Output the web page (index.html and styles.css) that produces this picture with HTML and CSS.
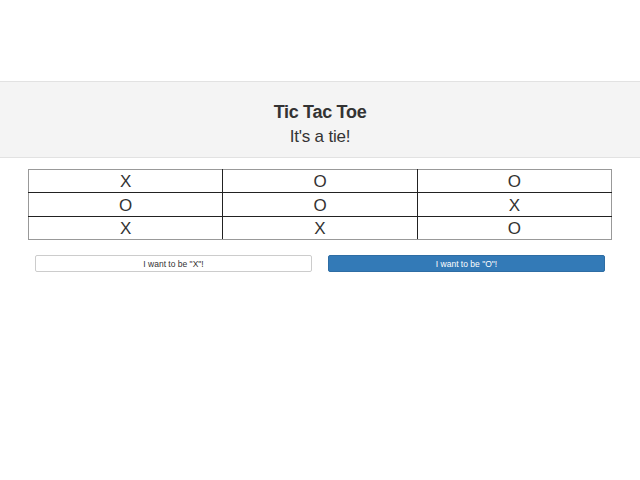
FILE: index.html
```html
<!DOCTYPE html>
<html>
<head>
<meta charset="utf-8">
<link rel="stylesheet" href="styles.css">
</head>
<body>
<div class="page">
  <header class="jumbo">
    <h1 class="title">Tic Tac Toe</h1>
    <p class="status">It's a tie!</p>
  </header>
  <div class="wrap">
    <table class="board">
      <tr><td>X</td><td>O</td><td>O</td></tr>
      <tr><td>O</td><td>O</td><td>X</td></tr>
      <tr><td>X</td><td>X</td><td>O</td></tr>
    </table>
    <div class="choices">
      <button class="btn btn-default">I want to be "X"!</button>
      <button class="btn btn-primary">I want to be "O"!</button>
    </div>
  </div>
</div>
</body>
</html>
```
FILE: styles.css
```css
html, body {
  margin: 0;
  padding: 0;
  background: #fff;
  font-family: "Liberation Sans", Arial, sans-serif;
  color: #333;
}
.page {
  padding-top: 81px;
}
.jumbo {
  background: #f4f4f4;
  border-top: 1px solid #e2e2e2;
  border-bottom: 1px solid #e2e2e2;
  height: 75px;
  display: flex;
  flex-direction: column;
  align-items: center;
}
.title {
  margin: 19px 0 0;
  font-size: 18px;
  line-height: 22px;
  font-weight: bold;
  letter-spacing: -0.3px;
  color: #333;
}
.status {
  margin: 4px 0 0;
  font-size: 17px;
  line-height: 20px;
  letter-spacing: -0.2px;
}
.wrap {
  padding: 0 28px;
  margin-top: 11px;
}
.board {
  width: 100%;
  border-collapse: collapse;
  border: 1px solid #999;
}
.board td {
  border: 1px solid #222;
  text-align: center;
  height: 21.4px;
  padding: 1px 0 0;
  font-size: 17px;
  line-height: 21px;
  width: 33.33%;
  color: #333;
}
.board tr:first-child td { border-top-color: #999; }
.board tr:last-child td { border-bottom-color: #999; }
.board td:first-child { border-left-color: #999; }
.board td:last-child { border-right-color: #999; }
.choices {
  display: flex;
  gap: 16px;
  padding: 0 7px;
  margin-top: 15px;
}
.btn {
  flex: 1;
  height: 17px;
  font-family: "Liberation Sans", Arial, sans-serif;
  font-size: 8.5px;
  border-radius: 2px;
  padding: 0;
  cursor: pointer;
}
.btn-default {
  background: #fff;
  border: 1px solid #ccc;
  color: #333;
}
.btn-primary {
  background: #337ab7;
  border: 1px solid #2e6da4;
  color: #fff;
}
```
